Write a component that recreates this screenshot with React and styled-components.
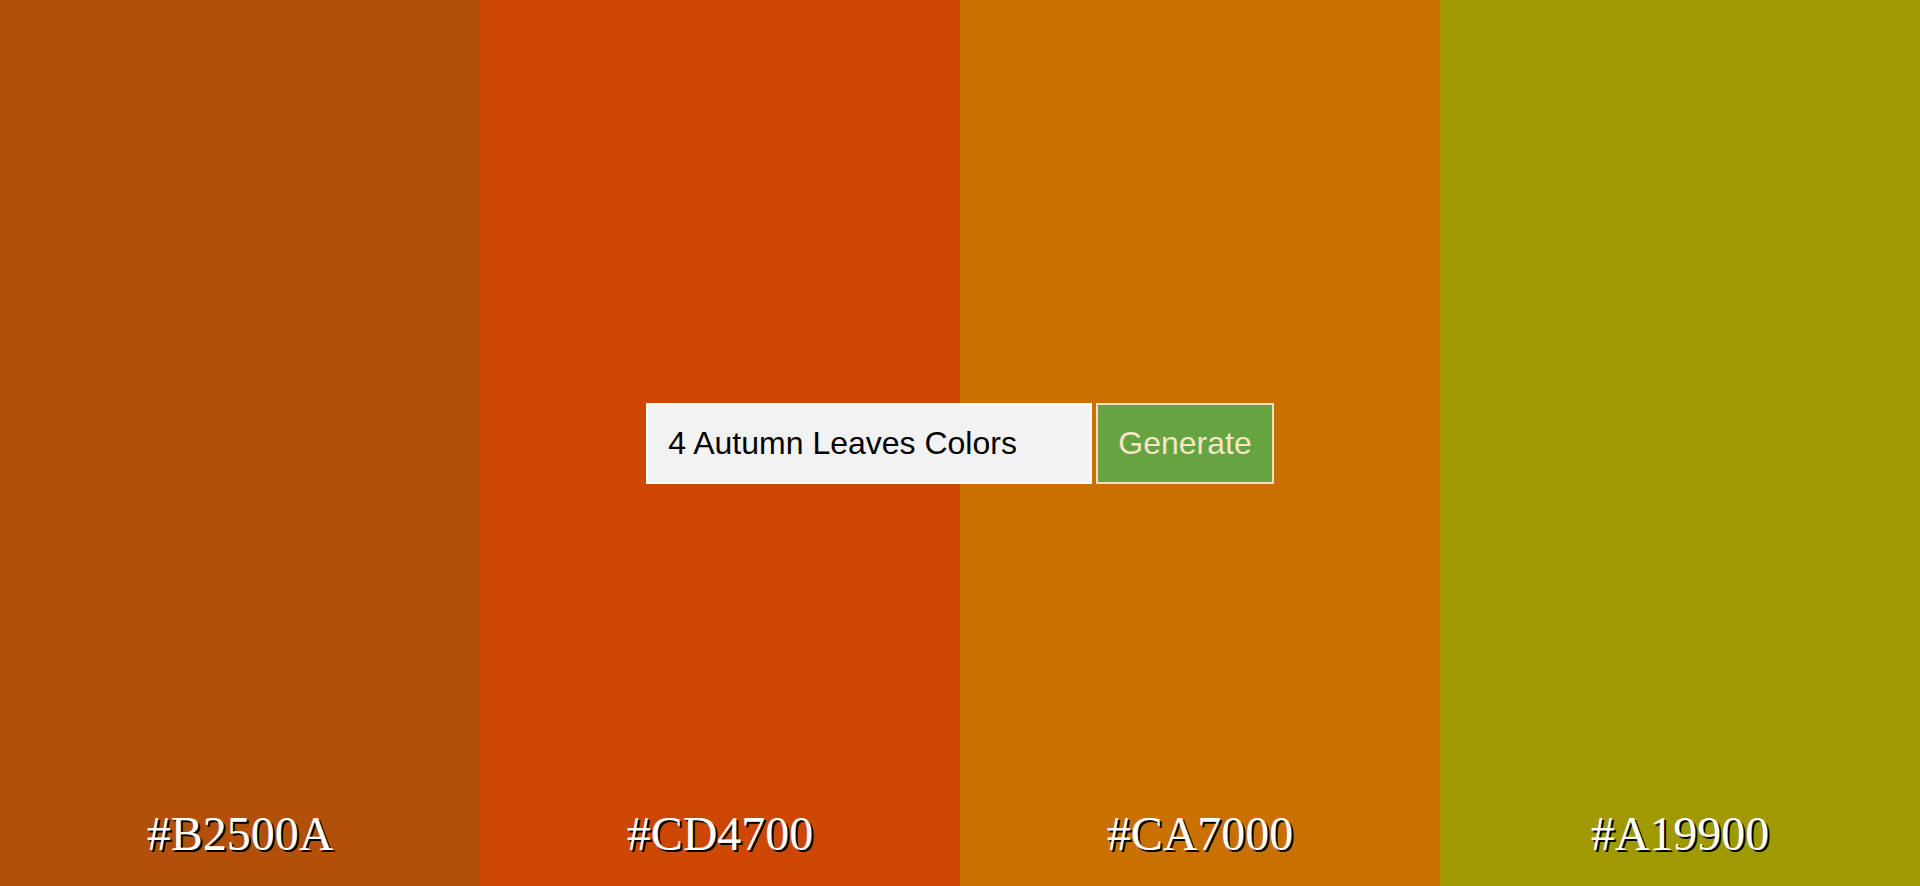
import React, { useState } from "react";
import styled, { createGlobalStyle } from "styled-components";

const palette = ["#B2500A", "#CD4700", "#CA7000", "#A19900"];

function App() {
  const [query, setQuery] = useState("4 Autumn Leaves Colors");

  return (
    <>
      <GlobalStyle />
      <Page>
        <Strip>
          {palette.map((hex) => (
            <Swatch key={hex} $color={hex}>
              <HexLabel>{hex}</HexLabel>
            </Swatch>
          ))}
        </Strip>
        <Overlay>
          <PromptForm onSubmit={(e) => e.preventDefault()}>
            <PromptInput
              type="text"
              value={query}
              onChange={(e) => setQuery(e.target.value)}
            />
            <GenerateButton type="submit">Generate</GenerateButton>
          </PromptForm>
        </Overlay>
      </Page>
    </>
  );
}

export default App;

const GlobalStyle = createGlobalStyle`
  html, body {
    margin: 0;
    padding: 0;
    overflow: hidden;
  }
  body {
    font-family: "Liberation Sans", Arial, sans-serif;
  }
`;

const Page = styled.div`
  position: relative;
  width: 100vw;
  height: 100vh;
`;

const Strip = styled.div`
  display: flex;
  height: 100%;
`;

const Swatch = styled.div`
  flex: 1;
  display: flex;
  flex-direction: column;
  justify-content: flex-end;
  align-items: center;
  background: ${(p) => p.$color};
`;

const HexLabel = styled.h2`
  margin: 0 0 25px;
  font-family: "Liberation Serif", "Times New Roman", serif;
  font-size: 48px;
  font-weight: normal;
  color: #fff;
  text-shadow: 2px 2px 0 #000;
`;

const Overlay = styled.div`
  position: absolute;
  inset: 0;
  display: flex;
  justify-content: center;
  align-items: center;
  pointer-events: none;
`;

const PromptForm = styled.form`
  display: flex;
  gap: 4px;
  pointer-events: auto;
`;

const PromptInput = styled.input`
  width: 402px;
  padding: 20px;
  border: 2px solid #ffffff;
  background: #f2f2f2;
  color: #000;
  font-family: "Liberation Sans", Arial, sans-serif;
  font-size: 32px;
  line-height: 37px;
  outline: none;
`;

const GenerateButton = styled.button`
  padding: 20px;
  border: 2px solid #efe1bd;
  background: #66a341;
  color: #f5e6c6;
  font-family: "Liberation Sans", Arial, sans-serif;
  font-size: 32px;
  line-height: 37px;
  cursor: pointer;
`;
